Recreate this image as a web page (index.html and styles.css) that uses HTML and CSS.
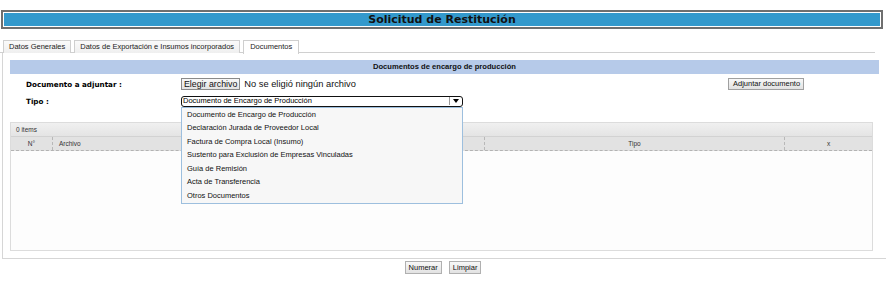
FILE: index.html
```html
<!DOCTYPE html>
<html lang="es">
<head>
<meta charset="utf-8">
<title>Solicitud de Restitución</title>
<link rel="stylesheet" href="styles.css">
</head>
<body>
<div class="title">Solicitud de Restitución</div>
<div class="tabs">
  <div class="tab">Datos Generales</div>
  <div class="tab">Datos de Exportación e Insumos incorporados</div>
  <div class="tab active">Documentos</div>
</div>
<div class="panel">
  <div class="section-head">Documentos de encargo de producción</div>
  <div class="form">
    <div class="row r1">
      <div class="label">Documento a adjuntar :</div>
      <div class="file"><span class="btn choose">Elegir archivo</span><span class="nofile">No se eligió ningún archivo</span></div>
      <span class="btn attach">Adjuntar documento</span>
    </div>
    <div class="row r2">
      <div class="label">Tipo :</div>
      <div class="select-wrap">
        <div class="select"><span class="sel-text">Documento de Encargo de Producción</span><span class="arrow"><svg width="6" height="4" viewBox="0 0 6 4"><path d="M0 0h6L3 4z" fill="#000"/></svg></span></div>
        <ul class="dropdown">
          <li>Documento de Encargo de Producción</li>
          <li>Declaración Jurada de Proveedor Local</li>
          <li>Factura de Compra Local (Insumo)</li>
          <li>Sustento para Exclusión de Empresas Vinculadas</li>
          <li>Guía de Remisión</li>
          <li>Acta de Transferencia</li>
          <li>Otros Documentos</li>
        </ul>
      </div>
    </div>
  </div>
  <div class="grid">
    <div class="grid-top">0 items</div>
    <div class="grid-head">
      <div class="c c-n">N°</div>
      <div class="c c-a">Archivo</div>
      <div class="c c-t">Tipo</div>
      <div class="c c-x">x</div>
    </div>
    <div class="grid-body"></div>
  </div>
</div>
<div class="actions">
  <span class="btn act">Numerar</span>
  <span class="btn act">Limpiar</span>
</div>
</body>
</html>
```
FILE: styles.css
```css
* { box-sizing: border-box; }
body {
  margin: 0;
  font-family: "Liberation Sans", Arial, sans-serif;
  font-size: 7.5px;
  color: #000;
  background: #fff;
}
.title {
  margin: 10px 3px 0 1px;
  height: 19px;
  border: 2px solid #6f6f6f;
  box-shadow: inset 0 0 0 1px #fff;
  background: #3399cc;
  text-align: center;
  font: bold 11px/15px "DejaVu Sans", sans-serif;
  color: #111;
}
.tabs {
  display: flex;
  gap: 3px;
  margin-top: 11px;
  padding-left: 3px;
  width: 875px;
  height: 13px;
  border-bottom: 1px solid #d0d0d0;
}
.tab {
  height: 13px;
  padding: 0 5px;
  border: 1px solid #cfcfcf;
  border-bottom: none;
  background: linear-gradient(#fafafa, #efefef);
  line-height: 12px;
  color: #222;
}
.tab.active {
  background: #fff;
  height: 14px;
  padding: 0 6px;
}
.panel {
  margin-left: 2px;
  border-left: 1px solid #d6d6d6;
  border-bottom: 1px solid #d6d6d6;
  padding: 7px;
}
.section-head {
  height: 14px;
  background: #b6cae9;
  text-align: center;
  font-weight: bold;
  font-size: 7.6px;
  line-height: 14px;
  color: #111;
}
.form { padding-left: 16px; }
.row { display: flex; align-items: center; }
.r1 { margin-top: 4px; height: 12px; }
.r2 { margin-top: 6px; height: 10px; }
.label {
  width: 155px;
  font: bold 7.2px "DejaVu Sans", sans-serif;
  color: #000;
}
.file { width: 547px; display: flex; align-items: center; }
.btn {
  display: inline-block;
  height: 12px;
  border: 1px solid #a0a0a0;
  background: linear-gradient(#f8f8f8, #e2e2e2);
  line-height: 10px;
  padding: 0 4px;
  color: #111;
  white-space: nowrap;
}
.choose { font-size: 8.8px; padding: 0 2px; border-color: #8a8a8a; }
.nofile { font-size: 9.3px; margin-left: 4px; color: #111; }
.attach { width: 76px; text-align: center; }
.select-wrap { position: relative; }
.select {
  width: 282px;
  height: 11px;
  border: 1.5px solid #111;
  border-radius: 3px;
  display: flex;
  align-items: center;
  background: #fff;
  overflow: hidden;
}
.sel-text { flex: 1; padding-left: 1px; line-height: 8px; }
.arrow {
  width: 13px;
  height: 8px;
  border-left: 1px solid #999;
  display: flex;
  align-items: center;
  justify-content: center;
}
.dropdown {
  position: absolute;
  left: 0;
  top: 100%;
  width: 282px;
  height: 97px;
  margin: 0;
  padding: 0;
  list-style: none;
  background: #f7f7f7;
  border: 1px solid #9dbfde;
  z-index: 5;
}
.dropdown li {
  height: 13.6px;
  line-height: 13.6px;
  padding-left: 5px;
  color: #111;
}
.grid {
  margin-top: 16px;
  width: 863px;
  height: 129px;
  border: 1px solid #dcdcdc;
  display: flex;
  flex-direction: column;
}
.grid-top {
  height: 14px;
  background: linear-gradient(#f0f0f0, #e4e4e4);
  border-bottom: 1px solid #d2d2d2;
  line-height: 14px;
  padding-left: 5px;
  font-size: 6.5px;
  color: #333;
}
.grid-head {
  display: flex;
  height: 14px;
  background: #e2e2e2;
  border-bottom: 1px dashed #b3b3b3;
  font-size: 6.5px;
  color: #333;
}
.c { line-height: 13px; border-right: 1px dashed #b8b8b8; }
.c-n { width: 42px; text-align: center; }
.c-a { width: 432px; padding-left: 6px; }
.c-t { width: 300px; text-align: center; }
.c-x { flex: 1; text-align: center; border-right: none; }
.grid-body { flex: 1; background: #fdfdfd; }
.actions {
  display: flex;
  justify-content: center;
  gap: 7px;
  margin-top: 2px;
}
.act {
  height: 13px;
  line-height: 11px;
  padding: 0 3px;
  font-size: 7.5px;
  border-color: #b0b0b0;
}
```
